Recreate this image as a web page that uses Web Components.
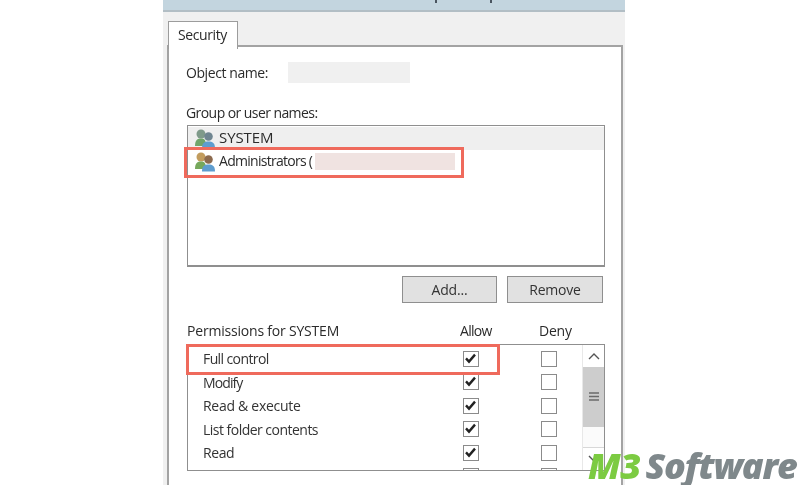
<!DOCTYPE html>
<html><head><meta charset="utf-8">
<style>
html,body{margin:0;padding:0;background:#fff;width:800px;height:485px;overflow:hidden}
body{font:14px "Open Sans","Liberation Sans",sans-serif;color:#2b2b2b}
</style></head>
<body>
<template id="t-check"><style>
:host{display:block;width:16px;height:16px;box-sizing:border-box;border:1.5px solid #8b8b8b;background:#fff;position:relative}
svg{display:block;width:13px;height:13px;margin:0}
</style><svg viewBox="0 0 13 13"><path d="M2 6.4 L5 9.6 L11 2.6" fill="none" stroke="#222" stroke-width="2.4"/></svg></template>

<template id="t-uicon"><style>
:host{display:block;width:22px;height:22px;flex:none}
svg{display:block;width:22px;height:22px}
.h1{fill:var(--h1)}.b1{fill:var(--b1)}.h2{fill:var(--h2)}.b2{fill:#5e9dcf}
</style><svg viewBox="0 0 22 22">
<circle cx="7" cy="6" r="4.5" class="h1"/>
<path d="M1 18 C1 12 3.5 10.500 7 10.500 C10.500 10.500 12 12 12 18Z" class="b1"/>
<circle cx="14.500" cy="8.500" r="4.300" class="h2"/>
<path d="M8 20.500 C8 15 10.500 13.500 14.500 13.500 C18.500 13.500 21 15 21 20.500Z" class="b2"/>
</svg></template>

<script>
function def(name,css,html){customElements.define(name,class extends HTMLElement{constructor(){super();const r=this.attachShadow({mode:'open'});r.innerHTML='<style>'+css+'</style>'+html;}});}
function defT(name,id){customElements.define(name,class extends HTMLElement{constructor(){super();this.attachShadow({mode:'open'}).appendChild(document.getElementById(id).content.cloneNode(true));}});}
defT('x-check','t-check');
defT('x-uicon','t-uicon');
customElements.define('x-box',class extends HTMLElement{constructor(){super();this.attachShadow({mode:'open'}).innerHTML='<style>:host{display:block;width:16px;height:16px;box-sizing:border-box;border:1.5px solid #8b8b8b;background:#fff}</style>';}});

def('x-app',':host{display:block;position:relative;width:800px;height:485px;overflow:hidden;padding-left:163px;box-sizing:border-box}','<slot></slot>');
def('x-window',`:host{display:block;position:relative;width:462px;height:485px;background:#f0f0f0;overflow:hidden;filter:blur(.35px)}
.tb{height:10px;background:#c3d5df;border-bottom:2px solid #b2bec5;display:flex;align-items:flex-end}
.tb i{display:block;width:2px;height:3px;margin-bottom:7px;background:#4a5560;margin-top:0}
.tb i.a{margin-left:272px}.tb i.b{margin-left:53px}
.tabs{height:35px;box-sizing:border-box;padding:9px 0 0 5px;display:flex}
.body{margin-left:4px;width:456px;height:440px}`,
`<div class="tb"><i class="a"></i><i class="b"></i></div><div class="tabs"><slot name="tab"></slot></div><div class="body"><slot></slot></div><slot name="over"></slot>`);
def('x-tab',`:host{display:block;position:relative;z-index:2;box-sizing:border-box;width:70px;height:28px;background:#fff;border:1.5px solid #9c9c9c;border-bottom:0;padding:3px 0 0 9px;font-size:14px;letter-spacing:-.4px}`,'<slot></slot>');
def('x-panel',`:host{display:block;box-sizing:border-box;width:456px;height:442px;margin-top:-2px;background:#fff;border:2px solid #a3a3a3;border-bottom:0;padding:15px 0 0 18px}`,'<slot></slot>');
def('x-label',`:host{display:block;font-size:14px;letter-spacing:-.57px;line-height:20px;white-space:nowrap;margin-left:-1px}`,'<slot></slot>');
def('x-redact',`:host{display:block;background:var(--c,#f0f0f0);width:var(--w,122px);height:var(--h,21px)}`,'');
def('x-objrow',`:host{display:flex;align-items:center;height:21px;gap:0}
::slotted(x-label){width:102px}`,'<slot></slot>');
def('x-ulist',`:host{display:block;box-sizing:border-box;width:418px;height:142px;margin-top:2px;border:1.5px solid #8f8f8f;border-bottom-width:2.5px;background:#fff;padding-top:1px;overflow:hidden}`,'<slot></slot>');
def('x-urow',`:host{display:flex;align-items:center;height:23px;padding-left:6px;gap:3px;font-size:14px;letter-spacing:-.72px;white-space:nowrap}
:host([sel]){background:#efefef}`,'<slot></slot>');
def('x-btnrow',`:host{display:flex;gap:10px;margin-top:9px;padding-left:215px}`,'<slot></slot>');
def('x-btn',`:host{display:flex;align-items:center;justify-content:center;box-sizing:border-box;width:var(--w,96px);height:27px;background:#e1e1e1;border:1.5px solid #8f8f8f;font-size:14px;letter-spacing:-.2px;color:#333}`,'<slot></slot>');
def('x-phead',`:host{display:grid;grid-template-columns:273px 79px 60px;margin-top:17px;height:20px;align-items:center;font-size:14px;letter-spacing:-.2px;white-space:nowrap}`,'<slot></slot>');
def('x-plist',`:host{display:flex;box-sizing:border-box;width:418px;height:127px;margin-top:4px;border:1.5px solid #8f8f8f;overflow:hidden;background:#fff}
.rows{flex:1;padding-top:2px;overflow:hidden}`,'<div class="rows"><slot></slot></div><slot name="sb"></slot>');
def('x-prow',`:host{display:grid;grid-template-columns:260px 16px 62px 16px;align-items:center;height:23.5px;padding-left:15px;font-size:14px;letter-spacing:-.42px;white-space:nowrap;color:#333}`,'<slot></slot>');
def('x-scroll',`:host{display:flex;flex-direction:column;flex:none;width:22px;box-sizing:border-box;border-left:1px solid #e8e8e8}
.b{height:22px;display:flex;align-items:center;justify-content:center;background:#fff}
.b.d{border-top:1px solid #d8d8d8}
.t{height:61px;background:#cdcdcd;display:flex;align-items:center;justify-content:center}
.g{height:21px;background:#fbfbfb}
svg{display:block}`,
`<div class="b"><svg width="12" height="8" viewBox="0 0 12 8"><path d="M1 7 L6 2 L11 7" fill="none" stroke="#555" stroke-width="1.4"/></svg></div>
<div class="t"><svg width="10" height="9" viewBox="0 0 10 9"><path d="M0 1H10M0 4.500H10M0 8H10" stroke="#6b6b6b" stroke-width="1.4"/></svg></div>
<div class="g"></div>
<div class="b d"><svg width="12" height="8" viewBox="0 0 12 8"><path d="M1 1 L6 6 L11 1" fill="none" stroke="#555" stroke-width="1.4"/></svg></div>`);
def('x-red',`:host{display:block;position:absolute;box-sizing:border-box;border:3px solid #ef6a5c;pointer-events:none}`,'');
def('x-logo',`:host{display:flex;gap:5px;position:absolute;left:588px;top:447px;height:38px;white-space:nowrap;font:italic 800 36px/38px "Open Sans","Liberation Sans",sans-serif;letter-spacing:-1.2px;color:#7f888b;filter:blur(.4px)}
b{font-weight:800;color:#7ccb42;letter-spacing:-.6px}`,'<b>M3</b><slot></slot>');
</script>

<x-app>
<x-window>
  <x-tab slot="tab">Security</x-tab>
  <x-panel>
    <x-objrow><x-label style="letter-spacing:-.42px">Object name:</x-label><x-redact></x-redact></x-objrow>
    <x-label style="margin-top:20px">Group or user names:</x-label>
    <x-ulist>
      <x-urow sel><x-uicon style="--h1:#7f9a8a;--b1:#6fa56a;--h2:#6f8590"></x-uicon><span style="font-size:15px;letter-spacing:-.1px;margin-top:-3px">SYSTEM</span></x-urow>
      <x-urow><x-uicon style="--h1:#c29c5e;--b1:#76a85c;--h2:#8c6a4e"></x-uicon><span style="margin-top:-2px">Administrators (</span><x-redact style="--c:#f0e3e1;--w:140px;--h:17px"></x-redact></x-urow>
    </x-ulist>
    <x-btnrow><x-btn style="--w:95px">Add...</x-btn><x-btn>Remove</x-btn></x-btnrow>
    <x-phead><span>Permissions for SYSTEM</span><span style="letter-spacing:-.7px">Allow</span><span>Deny</span></x-phead>
    <x-plist>
      <x-prow><span style="letter-spacing:-.6px">Full control</span><x-check></x-check><span></span><x-box></x-box></x-prow>
      <x-prow><span style="letter-spacing:-.9px">Modify</span><x-check></x-check><span></span><x-box></x-box></x-prow>
      <x-prow><span style="letter-spacing:-.28px">Read &amp; execute</span><x-check></x-check><span></span><x-box></x-box></x-prow>
      <x-prow><span style="letter-spacing:-.52px">List folder contents</span><x-check></x-check><span></span><x-box></x-box></x-prow>
      <x-prow><span>Read</span><x-check></x-check><span></span><x-box></x-box></x-prow>
      <x-prow><span></span><x-box></x-box><span></span><x-box></x-box></x-prow>
      <x-scroll slot="sb"></x-scroll>
    </x-plist>
  </x-panel>
  <x-red slot="over" style="left:21px;top:147px;width:280px;height:31px"></x-red>
  <x-red slot="over" style="left:23px;top:344px;width:314px;height:31px"></x-red>
</x-window>
<x-logo>Software</x-logo>
</x-app>
</body></html>
